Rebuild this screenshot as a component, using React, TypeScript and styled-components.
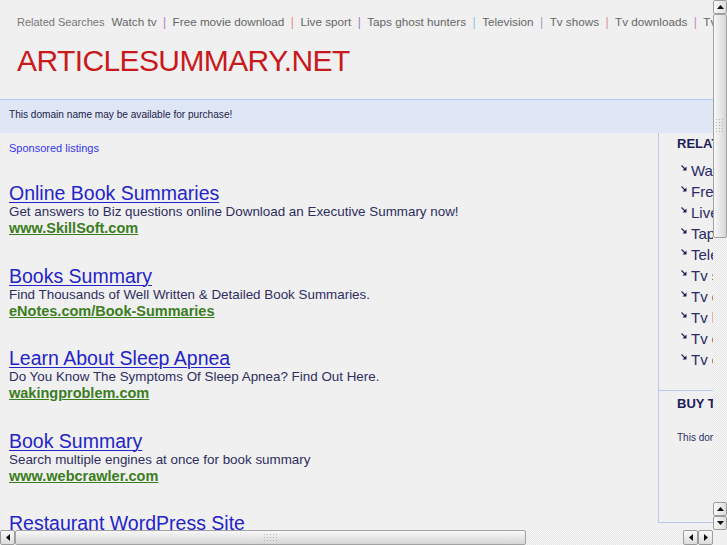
import React from 'react';
import styled, { createGlobalStyle } from 'styled-components';

const GlobalStyle = createGlobalStyle`
  html, body {
    margin: 0;
    padding: 0;
    overflow: hidden;
    background: #f0f0f0;
    font-family: "Liberation Sans", Arial, sans-serif;
  }
`;

// окно браузера с полосами прокрутки
const Frame = styled.div`
  display: grid;
  grid-template-columns: 713px 14px;
  grid-template-rows: 530px 15px;
  width: 727px;
  height: 545px;
  background: #f0f0f0;
`;

const Viewport = styled.div`
  overflow: hidden;
  background: #f0f0f0;
`;

const Page = styled.div`
  width: 920px;
`;

const Header = styled.div`
  height: 100px;
  box-sizing: border-box;
  padding: 15px 0 0 17px;
  border-bottom: 1px solid #b4c6ea;
`;

const RelatedBar = styled.div`
  display: flex;
  align-items: baseline;
  white-space: nowrap;
  line-height: 14px;
  color: #666;
`;

const RelatedLabel = styled.span`
  font-size: 11px;
  color: #777;
  margin-right: 7px;
`;

const TopLink = styled.a`
  font-size: 11.7px;
  color: #666;
  text-decoration: none;
`;

const Sep = styled.span<{ $c: string }>`
  font-size: 12px;
  color: ${p => p.$c};
  margin: 0 6.5px;
`;

const Logo = styled.div`
  margin-top: 15px;
  font-size: 30px;
  line-height: 34px;
  letter-spacing: -0.6px;
  color: #c8191c;
`;

const DomainBar = styled.div`
  height: 33px;
  box-sizing: border-box;
  padding: 9px 0 0 9px;
  background: #dfe6f6;
  font-size: 10.1px;
  line-height: 12px;
  color: #22224a;
`;

const Content = styled.div`
  display: flex;
  align-items: flex-start;
`;

const Main = styled.div`
  width: 658px;
  flex-shrink: 0;
  box-sizing: border-box;
  padding: 8px 0 0 9px;
`;

const Sponsored = styled.div`
  font-size: 11px;
  line-height: 14px;
  color: #3535ee;
  margin-bottom: 28px;
`;

const Ad = styled.div`
  margin-bottom: 28.5px;
`;

const AdTitle = styled.a`
  display: block;
  font-size: 19.5px;
  line-height: 20px;
  color: #2424c8;
  text-decoration: underline;
  text-decoration-thickness: 1px;
  text-underline-offset: 2px;
  white-space: nowrap;
`;

const AdDesc = styled.div`
  font-size: 13.4px;
  line-height: 17px;
  color: #2e2e5e;
  white-space: nowrap;
`;

const AdUrl = styled.a`
  display: block;
  font-size: 14.5px;
  line-height: 17px;
  font-weight: bold;
  color: #3b7d1f;
  text-decoration: underline;
  text-decoration-thickness: 1px;
  white-space: nowrap;
`;

const Sidebar = styled.div`
  width: 250px;
  flex-shrink: 0;
  border-left: 1px solid #b8c8ec;
  border-bottom: 1px solid #b8c8ec;
`;

const SideSection = styled.div<{ $top: number; $bottom: number; $height?: number; $line?: boolean }>`
  box-sizing: border-box;
  padding: ${p => p.$top}px 0 ${p => p.$bottom}px 18px;
  height: ${p => (p.$height ? p.$height + 'px' : 'auto')};
  border-bottom: ${p => (p.$line ? '1px solid #b8c8ec' : 'none')};
`;

const SideHeading = styled.div`
  font-size: 13px;
  line-height: 16px;
  font-weight: bold;
  color: #1c1c58;
  white-space: nowrap;
`;

const SideList = styled.ul`
  list-style: none;
  margin: 8px 0 0 0;
  padding: 0;
`;

const SideItem = styled.li`
  display: flex;
  align-items: center;
  gap: 4px;
  padding-left: 4px;
  font-size: 15px;
  line-height: 21px;
  color: #2a2a66;
  white-space: nowrap;
`;

const SideText = styled.div`
  margin-top: 20px;
  font-size: 10px;
  line-height: 12px;
  color: #2e2e66;
  white-space: nowrap;
`;

// полосы прокрутки
const VBar = styled.div`
  display: flex;
  flex-direction: column;
  background: repeating-conic-gradient(#e6e6e6 0 25%, #f7f7f7 0 50%) 0 0 / 2px 2px;
`;

const HBar = styled.div`
  display: flex;
  background: repeating-conic-gradient(#e6e6e6 0 25%, #f7f7f7 0 50%) 0 0 / 2px 2px;
`;

const Corner = styled.div`
  background: #f0f0f0;
`;

const Track = styled.div`
  flex: 1;
`;

const Stepper = styled.div<{ $vertical?: boolean }>`
  box-sizing: border-box;
  width: ${p => (p.$vertical ? '14px' : '15px')};
  height: ${p => (p.$vertical ? '14px' : '15px')};
  flex-shrink: 0;
  display: flex;
  align-items: center;
  justify-content: center;
  border: 1px solid #9c9c9c;
  border-radius: 2px;
  background: linear-gradient(${p => (p.$vertical ? '90deg' : '180deg')}, #fafafa, #dcdcdc);
`;

const Thumb = styled.div<{ $vertical?: boolean; $size: number }>`
  box-sizing: border-box;
  flex-shrink: 0;
  width: ${p => (p.$vertical ? '14px' : p.$size + 'px')};
  height: ${p => (p.$vertical ? p.$size + 'px' : '15px')};
  display: flex;
  align-items: center;
  justify-content: center;
  border: 1px solid #a2a2a2;
  border-radius: 2px;
  background: linear-gradient(${p => (p.$vertical ? '90deg' : '180deg')}, #f8f8f8, #d6d6d6);
`;

const Grip = styled.div<{ $vertical?: boolean }>`
  width: ${p => (p.$vertical ? '10px' : '16px')};
  height: ${p => (p.$vertical ? '16px' : '10px')};
  background: radial-gradient(circle, #b4b4b4 0.6px, transparent 0.9px) 0 0 / 3px 3px;
`;

type Dir = 'up' | 'down' | 'left' | 'right';

const Arrow = ({ dir }: { dir: Dir }) => {
  const pts: Record<Dir, string> = {
    up: '0,4 3.5,0 7,4',
    down: '0,0 3.5,4 7,0',
    left: '4,0 0,3.5 4,7',
    right: '0,0 4,3.5 0,7',
  };
  const vert = dir === 'up' || dir === 'down';
  return (
    <svg width={vert ? 7 : 4} height={vert ? 4 : 7} viewBox={vert ? '0 0 7 4' : '0 0 4 7'}>
      <polygon points={pts[dir]} fill="#111" />
    </svg>
  );
};

const Bullet = () => (
  <svg width="6" height="6" viewBox="0 0 6 6" style={{ marginTop: -5 }}>
    <path d="M0.5 0.5 L4 4" stroke="#1c1c58" strokeWidth="1.1" />
    <polygon points="5.5,1.5 5.5,5.5 1.5,5.5" fill="#1c1c58" />
  </svg>
);

const topLinks = [
  'Watch tv',
  'Free movie download',
  'Live sport',
  'Taps ghost hunters',
  'Television',
  'Tv shows',
  'Tv downloads',
  'Tv listings',
];
const sepColors = ['#b87ab8', '#e48a8a', '#a678c8', '#86c4e0', '#a0a0b0', '#d090a0', '#c08ac0', '#a0a0b0'];

const sideLinks = [
  'Watch tv',
  'Free movie download',
  'Live sport',
  'Taps ghost hunters',
  'Television',
  'Tv shows',
  'Tv downloads',
  'Tv listings',
  'Tv online',
  'Tv episodes',
];

const ads = [
  {
    title: 'Online Book Summaries',
    desc: 'Get answers to Biz questions online Download an Executive Summary now!',
    url: 'www.SkillSoft.com',
  },
  {
    title: 'Books Summary',
    desc: 'Find Thousands of Well Written & Detailed Book Summaries.',
    url: 'eNotes.com/Book-Summaries',
  },
  {
    title: 'Learn About Sleep Apnea',
    desc: 'Do You Know The Symptoms Of Sleep Apnea? Find Out Here.',
    url: 'wakingproblem.com',
  },
  {
    title: 'Book Summary',
    desc: 'Search multiple engines at once for book summary',
    url: 'www.webcrawler.com',
  },
  {
    title: 'Restaurant WordPress Site',
    desc: 'Beautiful restaurant themes for your WordPress website.',
    url: 'www.themeforest.net',
  },
];

export default function App() {
  return (
    <>
      <GlobalStyle />
      <Frame>
        <Viewport>
          <Page>
            <Header>
              <RelatedBar>
                <RelatedLabel>Related Searches</RelatedLabel>
                {topLinks.map((l, i) => (
                  <React.Fragment key={l}>
                    {i > 0 && <Sep $c={sepColors[i - 1]}>|</Sep>}
                    <TopLink href="#">{l}</TopLink>
                  </React.Fragment>
                ))}
              </RelatedBar>
              <Logo>ARTICLESUMMARY.NET</Logo>
            </Header>
            <DomainBar>This domain name may be available for purchase!</DomainBar>
            <Content>
              <Main>
                <Sponsored>Sponsored listings</Sponsored>
                {ads.map(ad => (
                  <Ad key={ad.title}>
                    <AdTitle href="#">{ad.title}</AdTitle>
                    <AdDesc>{ad.desc}</AdDesc>
                    <AdUrl href="#">{ad.url}</AdUrl>
                  </Ad>
                ))}
              </Main>
              <Sidebar>
                <SideSection $top={3} $bottom={20} $line>
                  <SideHeading>RELATED SEARCHES</SideHeading>
                  <SideList>
                    {sideLinks.map(l => (
                      <SideItem key={l}>
                        <Bullet />
                        {l}
                      </SideItem>
                    ))}
                  </SideList>
                </SideSection>
                <SideSection $top={5} $bottom={0} $height={131}>
                  <SideHeading>BUY THIS DOMAIN</SideHeading>
                  <SideText>This domain may be for sale by its owner!</SideText>
                </SideSection>
              </Sidebar>
            </Content>
          </Page>
        </Viewport>
        <VBar>
          <Stepper $vertical>
            <Arrow dir="up" />
          </Stepper>
          <Thumb $vertical $size={224}>
            <Grip $vertical />
          </Thumb>
          <Track />
          <Stepper $vertical>
            <Arrow dir="up" />
          </Stepper>
          <Stepper $vertical>
            <Arrow dir="down" />
          </Stepper>
        </VBar>
        <HBar>
          <Stepper>
            <Arrow dir="left" />
          </Stepper>
          <Thumb $size={511}>
            <Grip />
          </Thumb>
          <Track />
          <Stepper>
            <Arrow dir="left" />
          </Stepper>
          <Stepper>
            <Arrow dir="right" />
          </Stepper>
        </HBar>
        <Corner />
      </Frame>
    </>
  );
}
